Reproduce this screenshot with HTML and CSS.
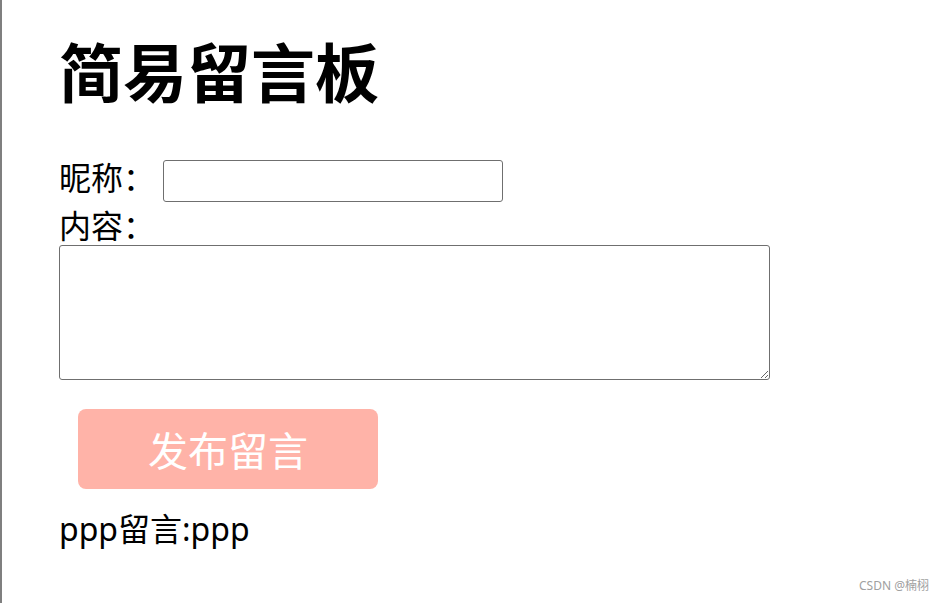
FILE: index.html
```html
<!DOCTYPE html>
<html lang="zh-CN">
<head>
  <meta charset="UTF-8">
  <meta name="viewport" content="width=device-width, initial-scale=1.0">
  <title>简易留言板</title>
  <link rel="stylesheet" href="styles.css">
</head>
<body>
  <div class="page">
    <h1>简易留言板</h1>

    <!-- 表单 -->
    <div class="form">
      <div class="row row-nick">
        <label for="nick">昵称：</label> <input type="text" id="nick" class="nick">
      </div>
      <div class="row row-content">
        <label for="content">内容：</label>
      </div>
      <textarea id="content" class="content"></textarea>
      <button class="submit">发布留言</button>
    </div>

    <!-- 留言列表 -->
    <div class="list">
      <p class="msg">ppp留言:ppp</p>
    </div>
  </div>

  <div class="mark">CSDN @楠栩</div>
</body>
</html>
```

FILE: styles.css
```css
body {
  margin: 0;
  font-family: "Noto Sans", "Noto Sans CJK SC", sans-serif;
  color: #000;
  background: #fff;
}

.page {
  min-height: 100vh;
  box-sizing: border-box;
  border-left: 2px solid #7f7f7f;
  padding: 37px 0 0 57px;
}

h1 {
  font-size: 64px;
  line-height: 72px;
  font-weight: bold;
  margin: 0 0 47px;
}

.row {
  font-size: 32px;
  line-height: 44px;
}

.row-nick {
  height: 48px;
}

.row-content {
  height: 41px;
}

.nick {
  width: 340px;
  height: 42px;
  box-sizing: border-box;
  border: 1px solid #6f6f6f;
  border-radius: 3px;
  vertical-align: middle;
}

.content {
  display: block;
  width: 711px;
  height: 135px;
  box-sizing: border-box;
  border: 1px solid #6f6f6f;
  border-radius: 3px;
  margin: 0;
}

.submit {
  display: block;
  width: 300px;
  height: 80px;
  margin: 29px 0 0 19px;
  border: none;
  border-radius: 8px;
  background-color: #ffb3a8;
  color: #fff;
  font-family: "Noto Sans CJK SC", sans-serif;
  font-size: 40px;
  cursor: pointer;
}

.msg {
  font-size: 32px;
  line-height: 44px;
  margin: 18px 0 0;
}

.mark {
  position: absolute;
  right: 14px;
  bottom: 9px;
  font-size: 12px;
  color: #a0a0a0;
}
```
